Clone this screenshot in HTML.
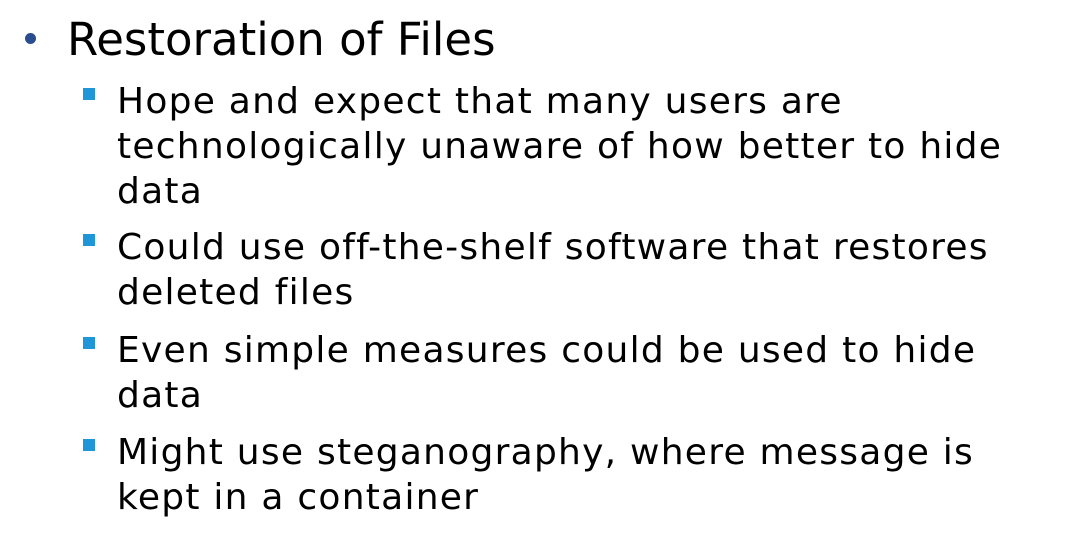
<!DOCTYPE html>
<html><head><meta charset="utf-8"><style>
html,body{margin:0;padding:0;background:#fff;width:1087px;height:535px;overflow:hidden}
body{font-family:"DejaVu Sans","Liberation Sans",sans-serif;color:#000;position:relative;font-variant-ligatures:none}
.t{position:absolute;left:67px;top:13px;font-size:45px;line-height:54px;white-space:nowrap}
.dot{position:absolute;left:25px;top:33px;width:11px;height:11px;border-radius:50%;background:#2a4d8f}
.item{position:absolute;left:117px;font-size:36px;line-height:45px;white-space:nowrap;letter-spacing:1.25px}
.sq{position:absolute;left:83px;width:12px;height:12px;background:#1e96d8}
</style></head><body>
<div class="dot"></div>
<div class="t">Restoration of Files</div>
<div class="sq" style="top:88px"></div>
<div class="item" style="top:79px">Hope and expect that many users are<br>technologically unaware of how better to hide<br>data</div>
<div class="sq" style="top:234px"></div>
<div class="item" style="top:225px">Could use off-the-shelf software that restores<br>deleted files</div>
<div class="sq" style="top:337px"></div>
<div class="item" style="top:328px">Even simple measures could be used to hide<br>data</div>
<div class="sq" style="top:439px"></div>
<div class="item" style="top:430px">Might use steganography, where message is<br>kept in a container</div>
</body></html>
